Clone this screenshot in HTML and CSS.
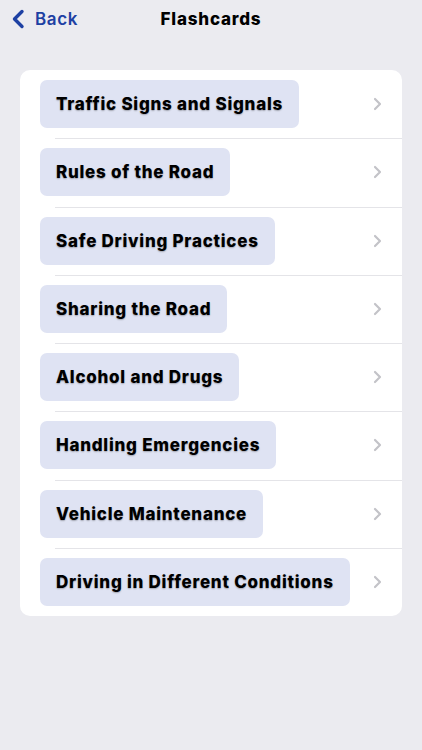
FILE: index.html
```html
<!DOCTYPE html>
<html>
<head>
<meta charset="utf-8">
<link rel="stylesheet" href="styles.css">
</head>
<body>
<div class="screen">
  <header class="nav">
    <div class="back">
      <svg class="back-icon" width="14" height="20" viewBox="0 0 14 20"><path d="M11 2.5 L3.5 10 L11 17.5" fill="none" stroke="#1d40a3" stroke-width="3.4" stroke-linecap="round" stroke-linejoin="round"/></svg>
      <span>Back</span>
    </div>
    <div class="title">Flashcards</div>
  </header>
  <div class="card">
    <div class="row"><span class="pill">Traffic Signs and Signals</span><span class="chev"><svg width="9" height="14" viewBox="0 0 9 14"><path d="M2 2 L7 7 L2 12" fill="none" stroke="#c3c3c8" stroke-width="2.2" stroke-linecap="round" stroke-linejoin="round"/></svg></span></div>
    <div class="row"><span class="pill">Rules of the Road</span><span class="chev"><svg width="9" height="14" viewBox="0 0 9 14"><path d="M2 2 L7 7 L2 12" fill="none" stroke="#c3c3c8" stroke-width="2.2" stroke-linecap="round" stroke-linejoin="round"/></svg></span></div>
    <div class="row"><span class="pill">Safe Driving Practices</span><span class="chev"><svg width="9" height="14" viewBox="0 0 9 14"><path d="M2 2 L7 7 L2 12" fill="none" stroke="#c3c3c8" stroke-width="2.2" stroke-linecap="round" stroke-linejoin="round"/></svg></span></div>
    <div class="row"><span class="pill">Sharing the Road</span><span class="chev"><svg width="9" height="14" viewBox="0 0 9 14"><path d="M2 2 L7 7 L2 12" fill="none" stroke="#c3c3c8" stroke-width="2.2" stroke-linecap="round" stroke-linejoin="round"/></svg></span></div>
    <div class="row"><span class="pill">Alcohol and Drugs</span><span class="chev"><svg width="9" height="14" viewBox="0 0 9 14"><path d="M2 2 L7 7 L2 12" fill="none" stroke="#c3c3c8" stroke-width="2.2" stroke-linecap="round" stroke-linejoin="round"/></svg></span></div>
    <div class="row"><span class="pill">Handling Emergencies</span><span class="chev"><svg width="9" height="14" viewBox="0 0 9 14"><path d="M2 2 L7 7 L2 12" fill="none" stroke="#c3c3c8" stroke-width="2.2" stroke-linecap="round" stroke-linejoin="round"/></svg></span></div>
    <div class="row"><span class="pill">Vehicle Maintenance</span><span class="chev"><svg width="9" height="14" viewBox="0 0 9 14"><path d="M2 2 L7 7 L2 12" fill="none" stroke="#c3c3c8" stroke-width="2.2" stroke-linecap="round" stroke-linejoin="round"/></svg></span></div>
    <div class="row"><span class="pill">Driving in Different Conditions</span><span class="chev"><svg width="9" height="14" viewBox="0 0 9 14"><path d="M2 2 L7 7 L2 12" fill="none" stroke="#c3c3c8" stroke-width="2.2" stroke-linecap="round" stroke-linejoin="round"/></svg></span></div>
  </div>
</div>
</body>
</html>
```
FILE: styles.css
```css
html, body {
  margin: 0;
  padding: 0;
  background: #ebebf0;
}
.screen {
  width: 422px;
  height: 750px;
  background: #ebebf0;
  font-family: Inter, "Liberation Sans", sans-serif;
}
.nav {
  position: relative;
  height: 38px;
  display: flex;
  align-items: center;
  justify-content: center;
}
.back {
  position: absolute;
  left: 11px;
  top: 9px;
  display: flex;
  align-items: center;
  gap: 10px;
  color: #1d40a3;
  font-size: 17px;
  font-weight: 600;
  letter-spacing: 0.6px;
}
.title {
  font-size: 17px;
  font-weight: 800;
  letter-spacing: 0.8px;
  color: #000;
}
.card {
  margin: 32px 20px 0 20px;
  background: #fff;
  border-radius: 10px;
  overflow: hidden;
}
.row {
  position: relative;
  height: 68.25px;
  box-sizing: border-box;
  display: flex;
  align-items: center;
  padding: 0 20px;
}
.row + .row::before {
  content: "";
  position: absolute;
  top: 0;
  left: 35px;
  right: 0;
  border-top: 1px solid #e4e4e8;
}
.pill {
  height: 48px;
  display: flex;
  align-items: center;
  padding: 0 16px;
  background: #dfe3f3;
  border-radius: 7px;
  font-size: 17px;
  font-weight: 800;
  letter-spacing: 0.75px;
  color: #000;
  text-shadow: 0 1px 1.5px rgba(0, 0, 0, 0.28);
}
.chev {
  margin-left: auto;
  display: flex;
}
```
